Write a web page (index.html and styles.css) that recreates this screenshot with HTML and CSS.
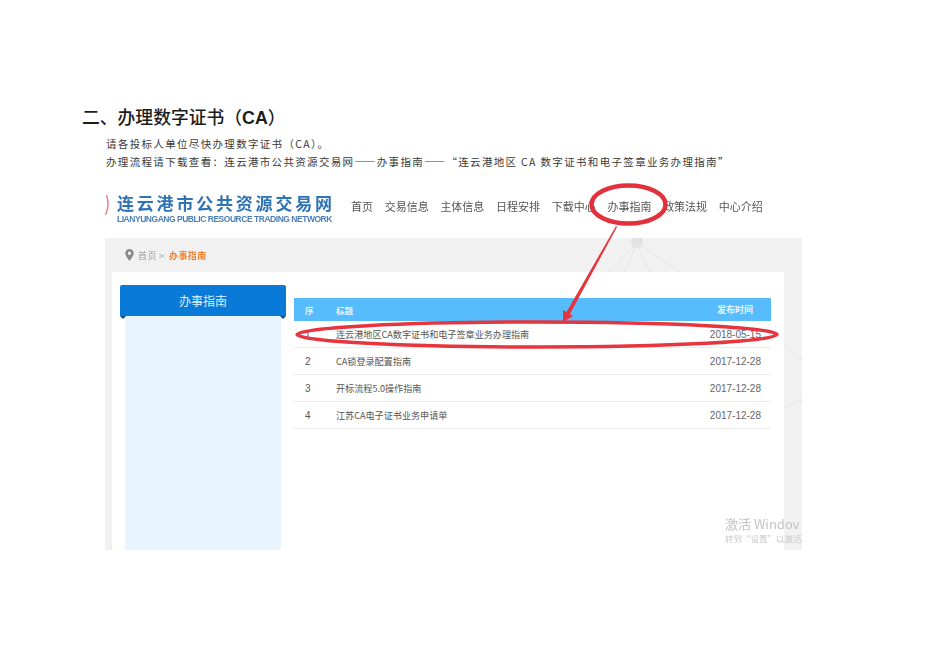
FILE: index.html
```html
<!DOCTYPE html>
<html lang="zh-CN">
<head>
<meta charset="utf-8">
<title>办理数字证书（CA）</title>
<link rel="stylesheet" href="styles.css">
</head>
<body>
<main class="page">
  <h1 class="title">二、办理数字证书（<b>CA</b>）</h1>
  <div class="intro">
    <p>请各投标人单位尽快办理数字证书（CA）。</p>
    <p>办理流程请下载查看：连云港市公共资源交易网——办事指南——“连云港地区 CA 数字证书和电子签章业务办理指南”</p>
  </div>

  <section class="shot">
    <header class="site-head">
      <div class="logo">
        <div class="logo-cn">连云港市公共资源交易网</div>
        <div class="logo-en">LIANYUNGANG PUBLIC RESOURCE TRADING NETWORK</div>
      </div>
      <nav class="nav">
        <span>首页</span><span>交易信息</span><span>主体信息</span><span>日程安排</span><span>下载中心</span><span>办事指南</span><span>政策法规</span><span>中心介绍</span>
      </nav>
    </header>

    <div class="content">
      <svg class="decor" width="697" height="312" viewBox="0 0 697 312">
        <g fill="none" stroke="#e6e6e6" stroke-width="1">
          <path d="M532 5L505 34M532 5L520 34M532 5L545 34M532 5L575 34"/>
          <path d="M679 107L697 122M679 170L697 162"/>
        </g>
        <circle cx="532" cy="4" r="6" fill="#e2e2e2"/>
      </svg>
      <div class="crumb">
        <svg class="pin" width="9" height="12" viewBox="0 0 9 12"><path fill="#8a8a8a" fill-rule="evenodd" d="M4.5 0A4.3 4.3 0 0 0 .2 4.3C.2 7 4.5 12 4.5 12S8.8 7 8.8 4.3A4.3 4.3 0 0 0 4.5 0zm0 2.6a1.7 1.7 0 1 1 0 3.4 1.7 1.7 0 0 1 0-3.4z"/></svg>
        <span>首页 &gt; </span><strong>办事指南</strong>
      </div>
      <div class="panel">
        <aside class="side">
          <div class="side-head">办事指南</div>
          <div class="side-body"></div>
        </aside>
        <div class="list">
          <div class="row row-head"><span>序</span><span>标题</span><span class="date">发布时间</span></div>
          <div class="row"><span>1</span><span>连云港地区CA数字证书和电子签章业务办理指南</span><span class="date">2018-05-15</span></div>
          <div class="row"><span>2</span><span>CA锁登录配置指南</span><span class="date">2017-12-28</span></div>
          <div class="row"><span>3</span><span>开标流程5.0操作指南</span><span class="date">2017-12-28</span></div>
          <div class="row"><span>4</span><span>江苏CA电子证书业务申请单</span><span class="date">2017-12-28</span></div>
        </div>
      </div>
      <div class="watermark">
        <div class="wm-big">激活 Windov</div>
        <div class="wm-small">转到“设置”以激活</div>
      </div>
    </div>
  </section>

  <svg class="marks" width="950" height="666" viewBox="0 0 950 666">
    <path d="M106.500 195Q110 205 105.500 215" fill="none" stroke="#e8808a" stroke-width="1.500"/>
    <ellipse cx="628.500" cy="204.500" rx="37" ry="19" fill="none" stroke="#e2303c" stroke-width="4.500"/>
    <ellipse cx="537" cy="334.500" rx="240" ry="12.500" fill="none" stroke="#e6353f" stroke-width="3.500"/>
    <polygon points="616,226 617,227 570,314 573,316 563,322 563,310 566.500,312" fill="#e6353f"/>
  </svg>
</main>
</body>
</html>
```

FILE: styles.css
```css
* { box-sizing: border-box; }
html, body { margin: 0; padding: 0; background: #fff; }
body { font-family: "Noto Sans CJK SC", "Liberation Sans", sans-serif; color: #333; }

.page { position: relative; width: 950px; height: 666px; padding-top: 105px; overflow: hidden; }

.title { margin: 0 0 0 82px; font-size: 17.800px; line-height: 23px; font-weight: 500; color: #1c1c1c; }
.title b { font-family: "Liberation Sans", sans-serif; font-weight: 700; }

.intro { margin: 5px 0 0 106px; font-size: 10.500px; line-height: 18px; letter-spacing: 1.330px; color: #3a3a3a; }
.intro p { margin: 0; white-space: nowrap; }

.shot { width: 697px; height: 367px; margin: 12px 0 0 105px; overflow: hidden; filter: blur(.35px); }

.site-head { display: flex; height: 55px; padding: 9px 0 0 12px; }
.logo { width: 234px; }
.logo-cn { font-size: 17px; line-height: 22px; font-weight: 700; letter-spacing: 2.800px; color: #2f73b5; white-space: nowrap; }
.logo-en { font-family: "Liberation Sans", sans-serif; font-size: 8.500px; line-height: 11px; font-weight: 700; letter-spacing: -.47px; color: #4d7fb5; white-space: nowrap; }
.nav { display: flex; gap: 11.700px; height: 28px; align-items: center; font-size: 11px; color: #555; white-space: nowrap; }

.content { position: relative; height: 312px; padding: 0 18px 0 7px; background: #f1f1f1; }
.decor { position: absolute; left: 0; top: 0; }
.crumb { position: relative; display: flex; align-items: center; height: 34px; padding-left: 13px; font-size: 9px; letter-spacing: .4px; color: #999; }
.crumb .pin { margin-right: 4px; }
.crumb span { white-space: pre; }
.crumb strong { margin-left: 2px; color: #f08030; font-weight: 700; }

.panel { position: relative; display: flex; height: 278px; padding: 13px 13px 0 8px; background: #fff; }

.side { display: flex; flex-direction: column; width: 166px; }
.side-head { position: relative; height: 31px; padding-bottom: 1px; background: #0a7ad8; color: #dff0ff; font-size: 12px; line-height: 31px; text-align: center; border-radius: 2px 2px 0 0; }
.side-head::before, .side-head::after { content: ""; position: absolute; bottom: -3px; border-top: 3px solid #0a4a86; border-left: 3px solid transparent; border-right: 3px solid transparent; }
.side-head::before { left: 0; }
.side-head::after { right: 0; }
.side-body { flex: 1; margin: 0 5px; background: #e8f4fe; }

.list { flex: 1; margin: 13px 0 0 8px; }
.row { display: grid; grid-template-columns: 42px 1fr 80px; align-items: center; height: 27px; border-bottom: 1px solid #ebebeb; font-size: 9.100px; color: #555; }
.row > span:first-child { padding-left: 11px; font-family: "Liberation Sans", sans-serif; font-size: 10px; }
.row .date { padding-right: 10px; text-align: right; font-family: "Liberation Sans", sans-serif; font-size: 10px; color: #666; }
.row-head { height: 23px; border-bottom: 0; background: #56bcfb; color: #e8f6ff; font-weight: 700; font-size: 8.500px; }
.row-head > span:first-child { font-family: inherit; font-size: 8.500px; }
.row-head .date { padding-right: 18px; font-family: inherit; font-size: 9px; color: #e8f6ff; }

.watermark { position: absolute; left: 620px; top: 277px; white-space: nowrap; color: #c4c4c4; }
.wm-big { font-size: 13px; line-height: 17px; }
.wm-small { font-size: 8.500px; line-height: 13px; color: #c8c8c8; }

.marks { position: absolute; left: 0; top: 0; pointer-events: none; }
```
